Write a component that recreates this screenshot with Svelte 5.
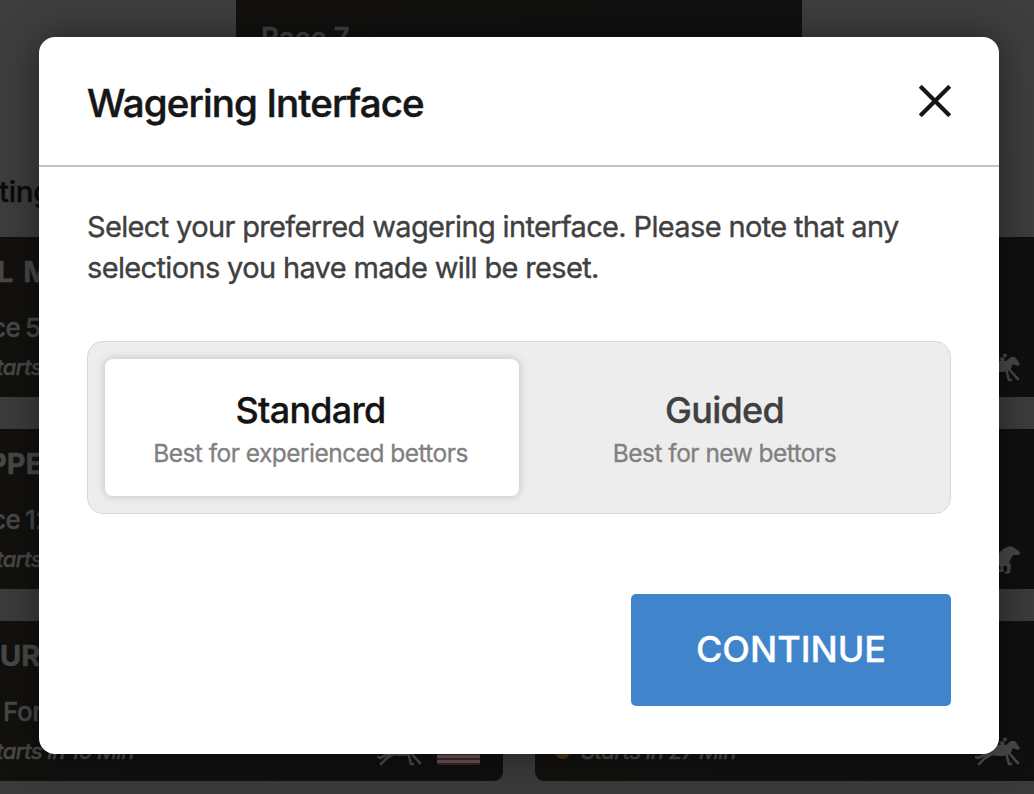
<script>
  let selected = $state('standard');
  const options = [
    { id: 'standard', title: 'Standard', note: 'Best for experienced bettors' },
    { id: 'guided', title: 'Guided', note: 'Best for new bettors' }
  ];
  const races = [
    { track: 'L M', race: 'ce 5', start: 'tarts', x: [-3, -9, -4], tight: false },
    { track: '' },
    { track: 'PPE', race: 'ce 12', start: 'tarts', x: [-12, -9, -4], tight: true },
    { track: '', tight: true },
    { track: 'UR', race: 'For', start: 'tarts in 15 Min', x: [0, 3, -4], flag: true },
    { track: '', later: 'Starts in 27 Min' }
  ];
</script>

<div class="screen">
  <div class="page" aria-hidden="true">
    <div class="hero"><span>Race 7</span></div>
    <h2>ting</h2>
    <div class="cards">
      {#each races as r}
        <div class="card">
          {#if r.track}
            <div class="info">
              <b style="margin-left:{r.x[0]}px">{r.track}</b>
              <span style="margin-left:{r.x[1]}px">{r.race}</span>
              <i style="margin-left:{r.x[2]}px">{r.start}</i>
            </div>
          {/if}
          {#if r.later}
            <div class="later"><span class="dot"></span><i>{r.later}</i></div>
          {/if}
          <div class="marks">
            <svg class="horse" width="46" height="32" viewBox="0 0 46 32">
              {#if r.tight}
                <path d="M18 19C22 11 25 7 30 4L35 2L38 3L45 8L44 11L38 11L34 18L36 21L35 29L30 30L30 28L32 27L32 22L28 22L29 28L22 28L22 26L26 25L25 22Z" />
              {:else}
                <circle cx="30" cy="3.5" r="2.1" />
                <path d="M24 6L28 5L30 8L27 10Z" />
                <path d="M14 15C18 9 24 8 31 9L36 5L40 5L45 12L43 14L38 12L35 18C29 21 21 20 15 19Z" />
                <path class="leg" d="M17 17L9 19L3 22L1 21M17 18L10 22L4 28M31 17L34 28L36 28M34 17L41 25L43 27" />
              {/if}
            </svg>
            {#if r.flag}<div class="flag"></div>{/if}
          </div>
        </div>
      {/each}
    </div>
  </div>

  <div class="overlay">
    <div class="modal" role="dialog" aria-labelledby="title">
      <header>
        <h1 id="title">Wagering Interface</h1>
        <button class="close" aria-label="Close">
          <svg width="32" height="32" viewBox="0 0 32 32"><path d="M1.3 1.3L30.7 30.7M30.7 1.3L1.3 30.7" /></svg>
        </button>
      </header>
      <div class="body">
        <p>Select your preferred wagering interface. Please note that any<br />selections you have made will be reset.</p>
        <div class="switch">
          {#each options as o}
            <button class="option {o.id}" class:on={selected === o.id} onclick={() => (selected = o.id)}>
              <strong>{o.title}</strong>
              <small>{o.note}</small>
            </button>
          {/each}
        </div>
        <button class="continue">CONTINUE</button>
      </div>
    </div>
  </div>
</div>

<style>
  :global(body) { margin: 0; background: #3c3c3c; }
  .screen, .screen * { box-sizing: border-box; }
  .screen {
    display: grid;
    grid-template: 794px / 1034px;
    overflow: hidden;
    font-family: Inter, "Liberation Sans", sans-serif;
    -webkit-font-smoothing: antialiased;
  }
  .page, .overlay { grid-area: 1 / 1; min-width: 0; min-height: 0; }
  .page { overflow: hidden; background: linear-gradient(#3e3e3e, #3a3a3a); color: #484848; -webkit-text-stroke: .4px currentColor; }
  .hero {
    width: 566px;
    height: 74px;
    margin-left: 236px;
    padding: 22px 25px 0;
    background: linear-gradient(90deg, #12110f, #101010);
    font-size: 27.5px;
    line-height: 30px;
    font-weight: 600;
    color: #414141;
  }
  h2 { margin: 101px 0 0 -1px; height: 62px; font-size: 29.5px; line-height: 32px; font-weight: 500; letter-spacing: -.3px; color: #0b0b0b; }
  .cards { display: grid; grid-template-columns: 567px 567px; grid-auto-rows: 160px; gap: 32px; margin-left: -64px; }
  .card {
    display: flex;
    justify-content: space-between;
    border-radius: 9px;
    background: linear-gradient(90deg, #13110e, #0f0f0f);
    overflow: hidden;
  }
  .info { display: flex; flex-direction: column; align-items: flex-start; padding: 18px 0 0 64px; white-space: nowrap; }
  .info b { font-size: 29px; line-height: 34px; font-weight: 700; word-spacing: 3px; }
  .info span { margin-top: 23px; font-size: 26px; line-height: 32px; font-weight: 500; letter-spacing: -.4px; word-spacing: -2px; }
  .info i { margin-top: 10px; font-size: 22px; line-height: 26px; font-weight: 500; letter-spacing: -.6px; }
  .later { display: flex; align-items: center; align-self: flex-end; gap: 11px; height: 26px; margin: 0 0 17px 20px; font-size: 22px; line-height: 26px; font-weight: 500; letter-spacing: -.6px; }
  .dot { width: 15px; height: 15px; border-radius: 50%; background: #4a3311; }
  .marks { display: flex; align-items: flex-end; gap: 14px; margin-left: auto; padding: 0 81px 13px 0; }
  .marks:has(.flag) { padding-right: 23px; }
  .horse { fill: #484848; display: block; }
  .leg { fill: none; stroke: #484848; stroke-width: 2.6; stroke-linecap: round; stroke-linejoin: round; }
  .flag {
    width: 43px;
    height: 29px;
    margin-bottom: 3px;
    border-radius: 2px;
    background: repeating-linear-gradient(0deg, #4b1d22 0 2px, #595959 2px 5px);
  }
  .overlay { display: flex; justify-content: center; align-items: flex-start; padding: 37px 35px 0 39px; z-index: 1; }
  .modal { width: 960px; height: 717px; border-radius: 16px; background: #fff; box-shadow: 0 0 38px rgba(0, 0, 0, .45); }
  header {
    display: flex;
    justify-content: space-between;
    align-items: center;
    height: 130px;
    padding: 0 48px;
    border-bottom: 2px solid #c4c4c4;
  }
  h1 { margin: 3px 0 0; font-size: 38.5px; line-height: 48px; font-weight: 500; letter-spacing: -.87px; color: #161616; -webkit-text-stroke: .5px #161616; }
  button { font-family: inherit; border: 0; padding: 0; cursor: pointer; }
  .close { background: none; }
  .close svg { display: block; fill: none; stroke: #161616; stroke-width: 4.2; }
  .body { display: flex; flex-direction: column; padding: 39px 48px 48px; }
  p { margin: 0; font-size: 29px; line-height: 41px; letter-spacing: -.65px; color: #404040; white-space: nowrap; -webkit-text-stroke: .35px #404040; }
  .switch {
    display: grid;
    grid-template-columns: 414px 414px;
    height: 173px;
    margin-top: 53px;
    padding: 17px 16px 17px 17px;
    border: 1px solid #d9d9d9;
    border-radius: 16px;
    background: #ededed;
  }
  .option {
    display: flex;
    flex-direction: column;
    align-items: center;
    justify-content: flex-start;
    padding: 29px 3px 0 0;
    border-radius: 8px;
    background: none;
    color: #404040;
  }
  .option.on { background: #fff; color: #141414; box-shadow: 0 0 10px rgba(0, 0, 0, .2); }
  strong { font-size: 36px; line-height: 44px; font-weight: 500; letter-spacing: -.75px; -webkit-text-stroke: .3px currentColor; }
  small { margin-top: 4px; font-size: 24.5px; line-height: 34px; color: #808080; letter-spacing: -.53px; -webkit-text-stroke: .3px #808080; }
  .continue {
    align-self: flex-end;
    width: 320px;
    height: 112px;
    margin-top: 80px;
    padding-bottom: 2px;
    border-radius: 5px;
    background: #4085cc;
    color: #fff;
    font-size: 36px;
    font-weight: 500;
    -webkit-text-stroke: .3px #fff;
  }
</style>
